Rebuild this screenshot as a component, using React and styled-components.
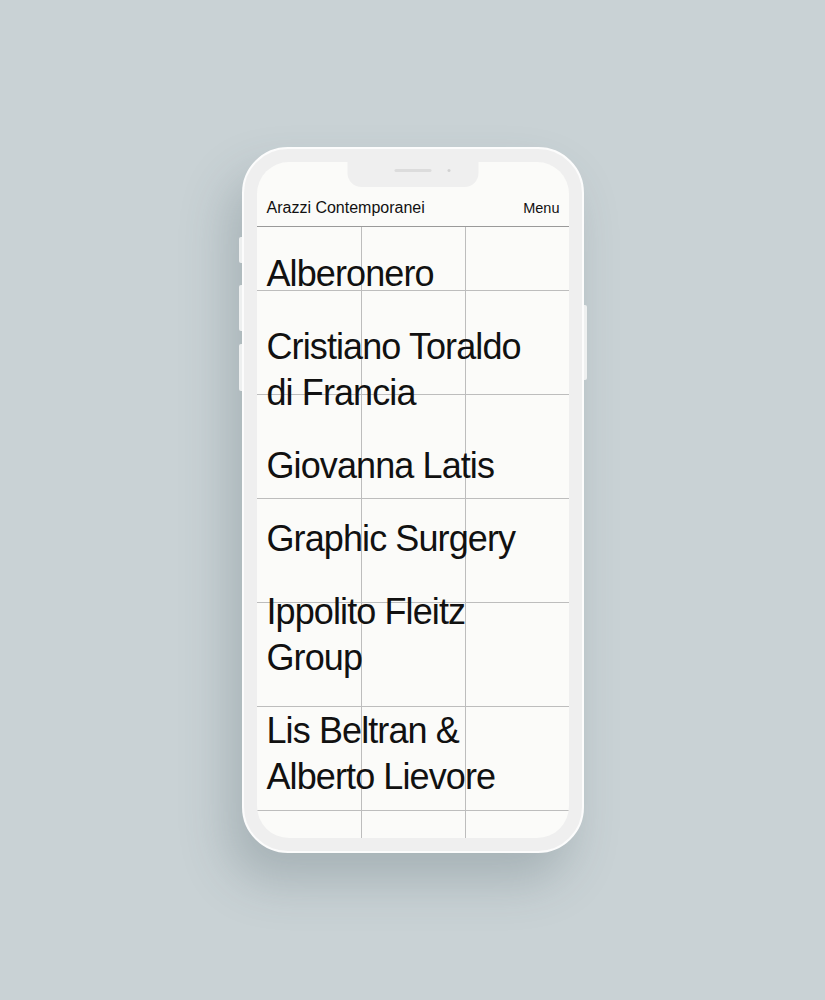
import React from "react";
import styled, { createGlobalStyle } from "styled-components";

const GlobalStyle = createGlobalStyle`
  html, body {
    margin: 0;
    padding: 0;
    background: #c9d2d5;
    font-family: "Liberation Sans", Arial, sans-serif;
    -webkit-font-smoothing: antialiased;
  }
`;

const Stage = styled.div`
  min-height: 1000px;
  display: flex;
  justify-content: center;
  align-items: flex-start;
  padding-top: 147px;
  box-sizing: border-box;
`;

const Phone = styled.div`
  position: relative;
  width: 342px;
  height: 706px;
  box-sizing: border-box;
  padding: 13px;
  border: 2px solid #fcfcfc;
  border-radius: 46px;
  background: #efefef;
  box-shadow: -14px 28px 48px rgba(70, 90, 98, 0.26);
`;

const SideButton = styled.div`
  position: absolute;
  width: 3px;
  top: ${(p) => p.$top}px;
  height: ${(p) => p.$height}px;
  ${(p) => (p.$side === "left" ? "left: -5px;" : "right: -5px;")}
  background: #eef0f0;
  border-radius: ${(p) => (p.$side === "left" ? "2px 0 0 2px" : "0 2px 2px 0")};
`;

const Screen = styled.div`
  position: relative;
  height: 100%;
  border-radius: 32px;
  background: #fbfbf9;
  overflow: hidden;
  display: flex;
  flex-direction: column;
`;

const Notch = styled.div`
  position: absolute;
  top: 0;
  left: 50%;
  transform: translateX(-50%);
  width: 131px;
  height: 25px;
  background: #efefef;
  border-radius: 0 0 14px 14px;
  display: flex;
  align-items: flex-start;
  justify-content: center;
  gap: 16px;
  padding-top: 7px;
  box-sizing: border-box;
`;

const Speaker = styled.div`
  width: 37px;
  height: 3px;
  border-radius: 2px;
  background: #dcdcdc;
  margin-left: 20px;
`;

const Camera = styled.div`
  width: 3px;
  height: 3px;
  border-radius: 50%;
  background: #d2d2d2;
`;

const Header = styled.header`
  height: 65px;
  flex: none;
  box-sizing: border-box;
  display: flex;
  align-items: flex-end;
  justify-content: space-between;
  padding: 0 9px 8px 10px;
  border-bottom: 1px solid #9a9a9a;
  color: #111;
`;

const Title = styled.div`
  font-size: 16px;
  line-height: 20px;
`;

const MenuLink = styled.div`
  font-size: 14.5px;
  line-height: 20px;
`;

const lineColor = "#bdbdbd";

const List = styled.ul`
  list-style: none;
  margin: 0;
  flex: 1;
  padding: 24px 22px 0 10px;
  display: flex;
  flex-direction: column;
  gap: 27px;
  background-image:
    linear-gradient(${lineColor}, ${lineColor}),
    linear-gradient(${lineColor}, ${lineColor}),
    repeating-linear-gradient(
      to bottom,
      transparent 0px,
      transparent 63px,
      ${lineColor} 63px,
      ${lineColor} 64px,
      transparent 64px,
      transparent 104px
    );
  background-repeat: no-repeat;
  background-size: 1px 100%, 1px 100%, 100% 100%;
  background-position: 104px 0, 208px 0, 0 0;
`;

const Item = styled.li`
  font-size: 36px;
  line-height: 46px;
  letter-spacing: -0.9px;
  color: #111;
`;

const names = [
  "Alberonero",
  "Cristiano Toraldo di Francia",
  "Giovanna Latis",
  "Graphic Surgery",
  "Ippolito Fleitz Group",
  "Lis Beltran & Alberto Lievore",
];

export default function App() {
  return (
    <>
      <GlobalStyle />
      <Stage>
        <Phone>
          <SideButton $side="left" $top={88} $height={26} />
          <SideButton $side="left" $top={136} $height={46} />
          <SideButton $side="left" $top={195} $height={47} />
          <SideButton $side="right" $top={156} $height={75} />
          <Screen>
            <Notch>
              <Speaker />
              <Camera />
            </Notch>
            <Header>
              <Title>Arazzi Contemporanei</Title>
              <MenuLink>Menu</MenuLink>
            </Header>
            <List>
              {names.map((n) => (
                <Item key={n}>{n}</Item>
              ))}
            </List>
          </Screen>
        </Phone>
      </Stage>
    </>
  );
}
